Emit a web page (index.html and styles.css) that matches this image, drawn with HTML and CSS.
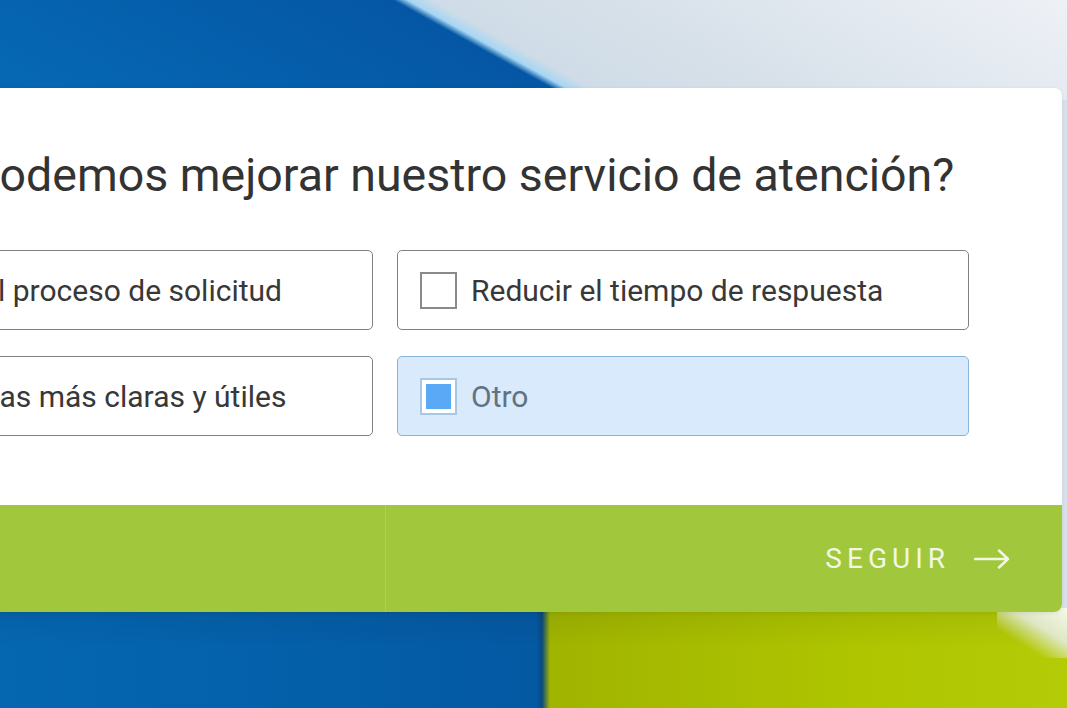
FILE: index.html
```html
<!DOCTYPE html>
<html lang="es">
<head>
  <meta charset="UTF-8">
  <title>Encuesta de servicio</title>
  <meta name="viewport" content="width=device-width, initial-scale=1.0">
  <link rel="stylesheet" href="styles.css">
</head>
<body>
  <div class="page">
    <div class="card">
      <div class="card-body">
        <h1 class="question">¿Cómo podemos mejorar nuestro servicio de atención?</h1>

        <div class="options">
          <label class="option">
            <span class="check"></span>
            <span class="option-text">Agilizar el proceso de solicitud</span>
          </label>
          <label class="option">
            <span class="check"></span>
            <span class="option-text">Reducir el tiempo de respuesta</span>
          </label>
          <label class="option">
            <span class="check"></span>
            <span class="option-text">Respuestas más claras y útiles</span>
          </label>
          <label class="option selected">
            <span class="check"></span>
            <span class="option-text">Otro</span>
          </label>
        </div>
      </div>

      <div class="card-footer">
        <button class="nav-btn back">
          <svg width="36" height="20" viewBox="0 0 36 20"><path d="M35 10H2M11 1.5L2 10l9 8.5"/></svg>
          ATRÁS
        </button>
        <button class="nav-btn next">
          SEGUIR
          <svg width="36" height="20" viewBox="0 0 36 20"><path d="M1 10h33M25 1.5l9 8.5-9 8.5"/></svg>
        </button>
      </div>
    </div>
  </div>
</body>
</html>
```

FILE: styles.css
```css
html, body {
  margin: 0;
  padding: 0;
  height: 100%;
}
body {
  overflow: hidden;
  font-family: Roboto, "Noto Sans", sans-serif;
  background-color: #d8e1e9;
  /* backdrop: blue / grey split above the card, blue / lime below it */
  background-image:
    linear-gradient(212deg, rgba(255,255,255,0.9) 0, rgba(235,240,246,0.8) 30px, rgba(255,255,255,0) 55px),
    linear-gradient(to bottom, rgba(0,0,0,0.07), rgba(0,0,0,0) 40px),
    linear-gradient(to right, #0567b1 0, #0459a3 536px, #0a4a7e 542px, #a0b400 550px, #aec500 80%, #b4cb08 100%),
    linear-gradient(29deg, #0669b4 0, #0557a5 278px, #a6d6f4 285px, #cfdce7 297px, #d6e0e9 62%, #eef1f6 100%);
  background-size: 70px 50px, 100% 100px, 100% 100px, 100% 100px;
  background-position: right 0 top 608px, left 0 top 608px, left 0 top 608px, left 0 top 0;
  background-repeat: no-repeat;
}
.page {
  padding-top: 88px;
}
.card {
  width: 1354px;
  margin-left: -292px;
  background: #fff;
  border-radius: 8px;
  overflow: hidden;
  box-shadow: 0 1px 4px rgba(0, 0, 0, 0.08);
}
.card-body {
  padding: 61px 93px 69px;
}
.question {
  margin: 0 0 49px;
  font-size: 46.5px;
  line-height: 52px;
  font-weight: 400;
  color: #333;
  text-align: center;
  white-space: nowrap;
}
.options {
  display: grid;
  grid-template-columns: 1fr 1fr;
  column-gap: 24px;
  row-gap: 26px;
}
.option {
  box-sizing: border-box;
  height: 80px;
  display: flex;
  align-items: center;
  gap: 14px;
  padding-left: 22px;
  border: 1.5px solid #808080;
  border-radius: 5px;
  background: #fff;
  cursor: pointer;
}
.check {
  box-sizing: border-box;
  width: 37px;
  height: 37px;
  flex: none;
  border: 2px solid #8a8a8a;
  background: #fff;
  padding: 4px;
}
.option-text {
  font-size: 30px;
  color: #383838;
  white-space: nowrap;
}
.option.selected {
  background: #d9eafc;
  border-color: #86b5dc;
}
.option.selected .check {
  border-color: #a7c7e4;
}
.option.selected .check::after {
  content: "";
  display: block;
  width: 100%;
  height: 100%;
  background: #5aa9f6;
}
.option.selected .option-text {
  color: #637280;
}
.card-footer {
  display: grid;
  grid-template-columns: 1fr 1fr;
  height: 107px;
  background: #a1c83d;
}
.nav-btn {
  display: flex;
  align-items: center;
  gap: 24px;
  background: none;
  border: none;
  padding: 0 52px;
  font-family: inherit;
  font-size: 28px;
  letter-spacing: 5px;
  color: #f1f7e2;
  cursor: pointer;
}
.nav-btn svg {
  fill: none;
  stroke: currentColor;
  stroke-width: 2.5;
  stroke-linecap: round;
  stroke-linejoin: round;
}
.back {
  justify-content: flex-start;
}
.next {
  justify-content: flex-end;
  border-left: 1px solid rgba(255, 255, 255, 0.14);
}
```
